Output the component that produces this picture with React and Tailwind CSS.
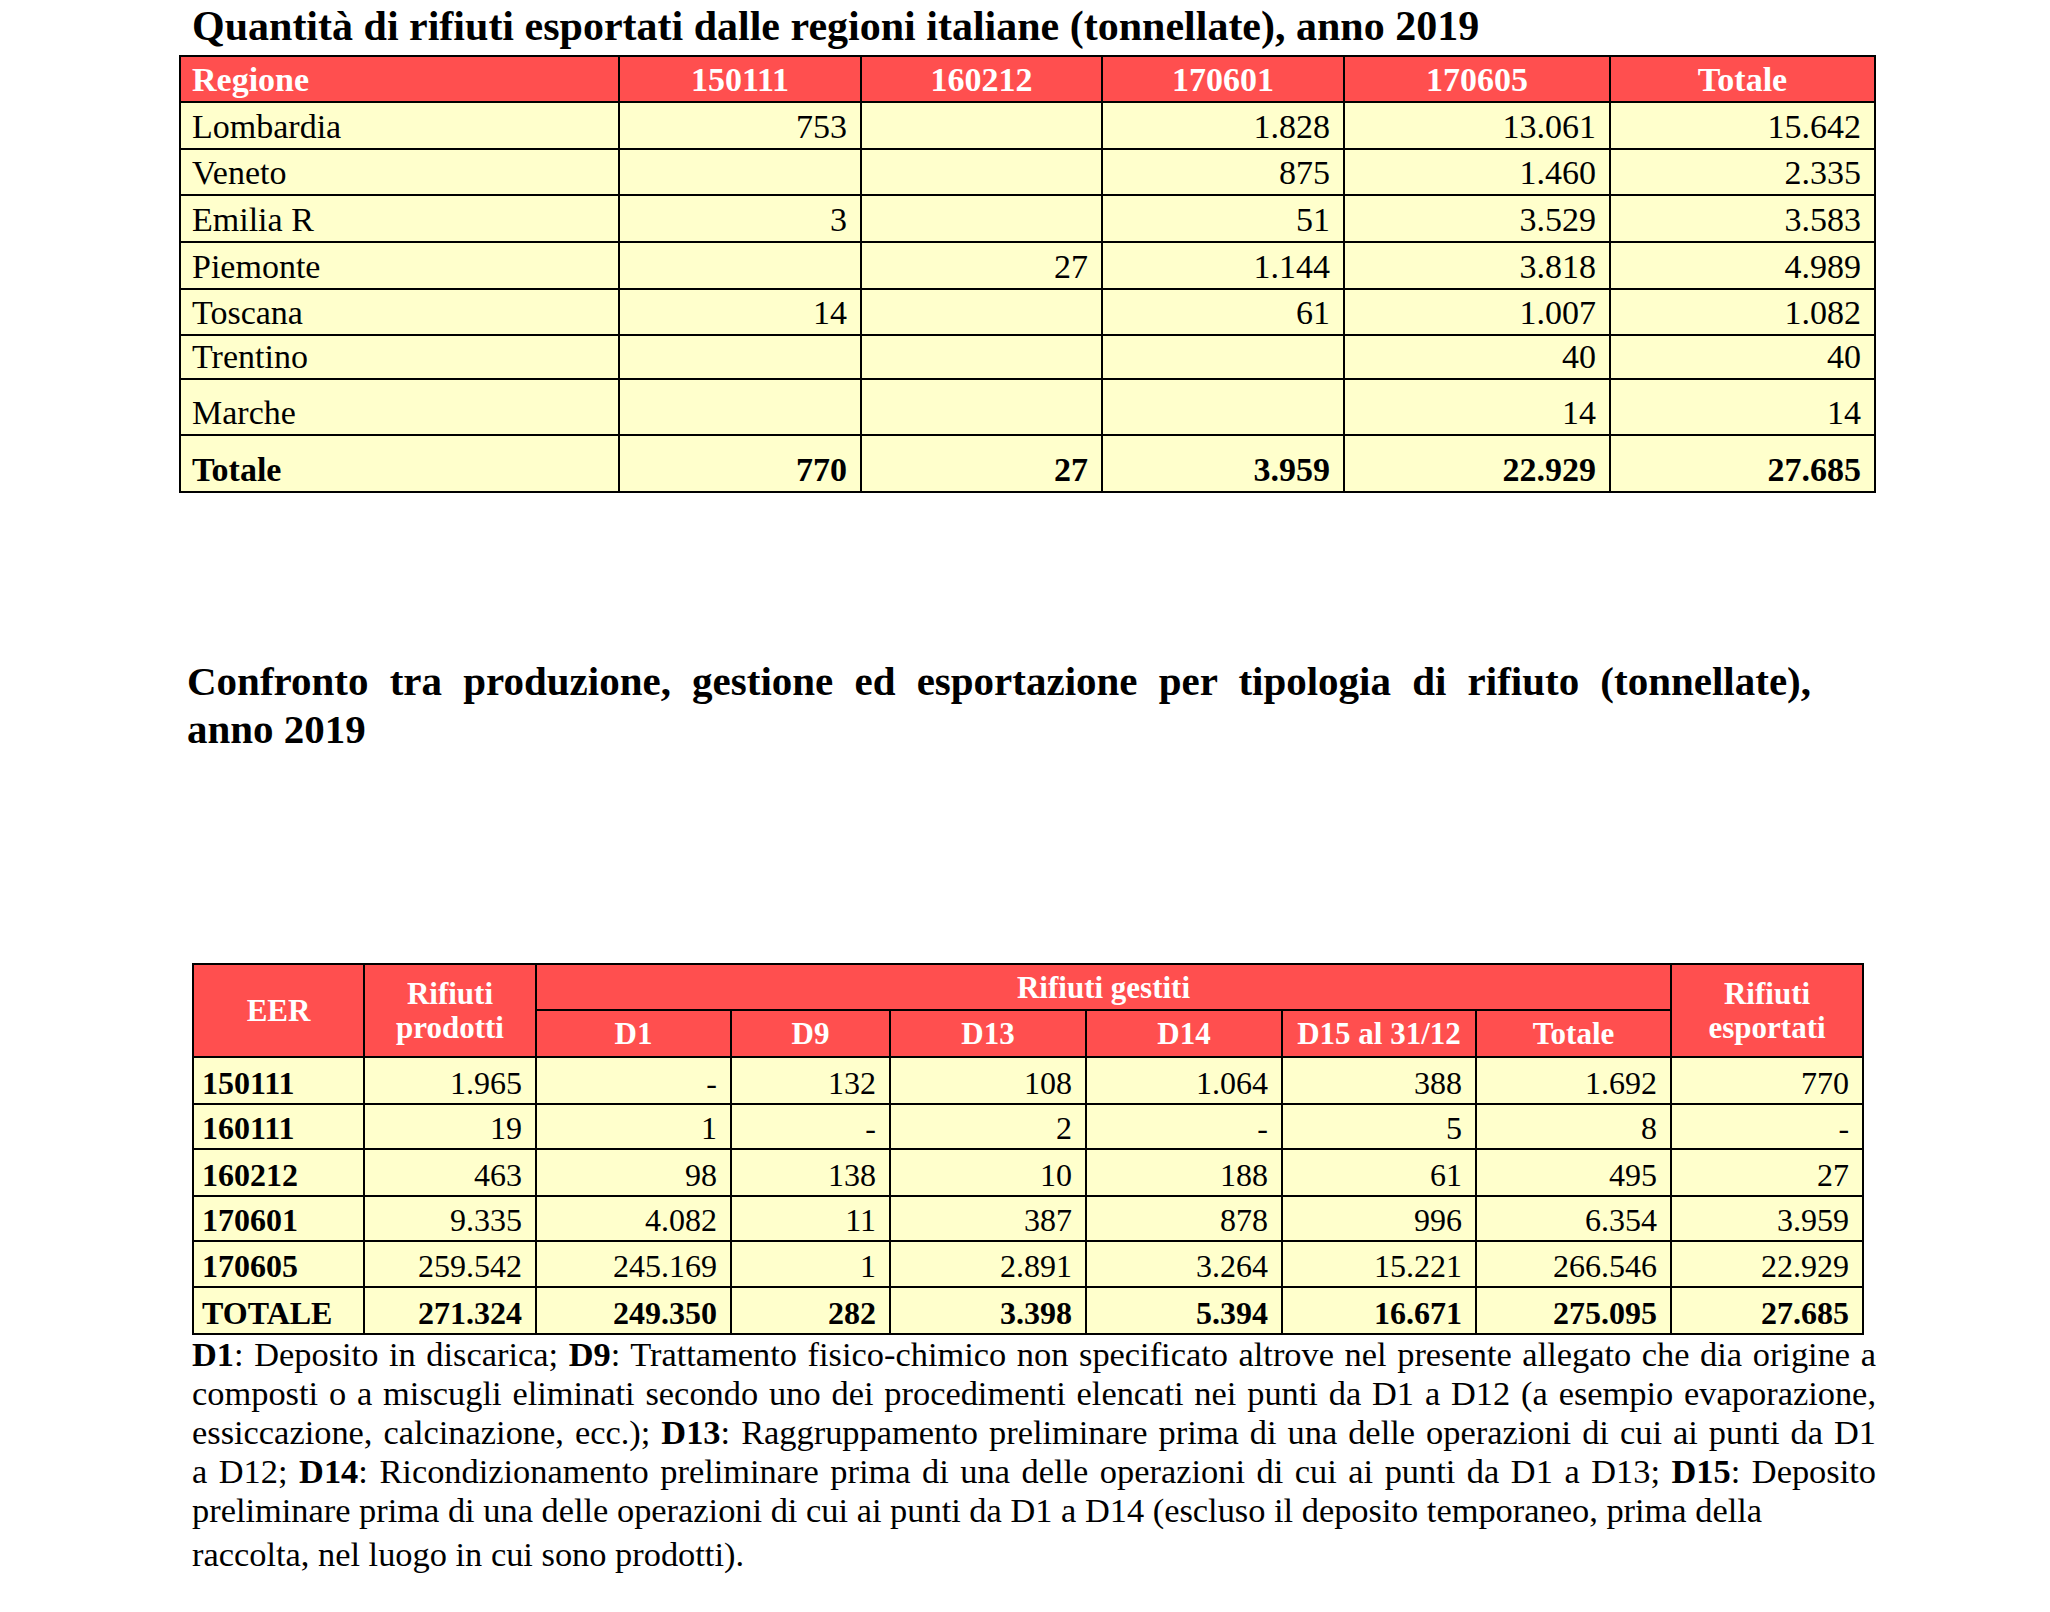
import React from "react";

const regioni = [
  ["Lombardia", "753", "", "1.828", "13.061", "15.642"],
  ["Veneto", "", "", "875", "1.460", "2.335"],
  ["Emilia R", "3", "", "51", "3.529", "3.583"],
  ["Piemonte", "", "27", "1.144", "3.818", "4.989"],
  ["Toscana", "14", "", "61", "1.007", "1.082"],
  ["Trentino", "", "", "", "40", "40"],
  ["Marche", "", "", "", "14", "14"],
];
const regioniH = ["h-[47px]", "h-[46px]", "h-[47px]", "h-[47px]", "h-[46px]", "h-[44px]", "h-[56px]"];

const tipologie = [
  ["150111", "1.965", "-", "132", "108", "1.064", "388", "1.692", "770"],
  ["160111", "19", "1", "-", "2", "-", "5", "8", "-"],
  ["160212", "463", "98", "138", "10", "188", "61", "495", "27"],
  ["170601", "9.335", "4.082", "11", "387", "878", "996", "6.354", "3.959"],
  ["170605", "259.542", "245.169", "1", "2.891", "3.264", "15.221", "266.546", "22.929"],
];
const tipologieH = ["h-[47px]", "h-[45px]", "h-[47px]", "h-[45px]", "h-[46px]"];

const cell = "border-2 border-black align-bottom leading-none pb-[4px]";
const head = "border-2 border-black bg-[#ff4f4f] text-white";

export default function App() {
  return (
    <div className="min-h-screen bg-white text-black font-['Liberation_Serif','Times_New_Roman',serif]">
      {/* Tabella regioni */}
      <div className="pl-[179px] pt-[4px]">
        <h2 className="pl-[13px] text-[42px] font-bold leading-[45px] h-[51px] whitespace-nowrap">
          Quantità di rifiuti esportati dalle regioni italiane (tonnellate), anno 2019
        </h2>
        <table className="border-collapse w-[1695px] table-fixed text-[34px] bg-[#ffffcc]">
          <colgroup>
            <col className="w-[439px]" />
            <col className="w-[242px]" />
            <col className="w-[241px]" />
            <col className="w-[242px]" />
            <col className="w-[266px]" />
            <col className="w-[265px]" />
          </colgroup>
          <thead>
            <tr className="h-[46px]">
              <th className={`${head} ${cell} text-left pl-[11px] font-bold`}>Regione</th>
              {["150111", "160212", "170601", "170605", "Totale"].map((h) => (
                <th key={h} className={`${head} ${cell} text-center font-bold`}>
                  {h}
                </th>
              ))}
            </tr>
          </thead>
          <tbody>
            {regioni.map((r, i) => (
              <tr key={r[0]} className={regioniH[i]}>
                <td className={`${cell} pl-[11px]`}>{r[0]}</td>
                {r.slice(1).map((v, j) => (
                  <td key={j} className={`${cell} text-right pr-[13px]`}>
                    {v}
                  </td>
                ))}
              </tr>
            ))}
            <tr className="h-[57px] font-bold">
              <td className={`${cell} pl-[11px]`}>Totale</td>
              {["770", "27", "3.959", "22.929", "27.685"].map((v, j) => (
                <td key={j} className={`${cell} text-right pr-[13px]`}>
                  {v}
                </td>
              ))}
            </tr>
          </tbody>
        </table>
      </div>

      {/* Titolo confronto */}
      <div className="pl-[187px] pt-[164px] w-[1811px] text-[41px] font-bold leading-[48px]">
        <p className="text-justify [text-align-last:justify]">
          Confronto tra produzione, gestione ed esportazione per tipologia di rifiuto (tonnellate),
        </p>
        <p>anno 2019</p>
      </div>

      {/* Tabella tipologie */}
      <div className="pl-[192px] pt-[210px]">
        <table className="border-collapse w-[1670px] table-fixed text-[32px] bg-[#ffffcc]">
          <colgroup>
            <col className="w-[171px]" />
            <col className="w-[172px]" />
            <col className="w-[195px]" />
            <col className="w-[159px]" />
            <col className="w-[196px]" />
            <col className="w-[196px]" />
            <col className="w-[194px]" />
            <col className="w-[195px]" />
            <col className="w-[192px]" />
          </colgroup>
          <thead className="font-bold text-[31px]">
            <tr className="h-[46px]">
              <th rowSpan={2} className={`${head} text-center align-middle leading-none`}>
                EER
              </th>
              <th rowSpan={2} className={`${head} text-center align-middle leading-[34px]`}>
                Rifiuti
                <br />
                prodotti
              </th>
              <th colSpan={6} className={`${head} text-center align-middle leading-none`}>
                Rifiuti gestiti
              </th>
              <th rowSpan={2} className={`${head} text-center align-middle leading-[34px]`}>
                Rifiuti
                <br />
                esportati
              </th>
            </tr>
            <tr className="h-[47px]">
              {["D1", "D9", "D13", "D14", "D15 al 31/12", "Totale"].map((h) => (
                <th key={h} className={`${head} text-center align-middle leading-none`}>
                  {h}
                </th>
              ))}
            </tr>
          </thead>
          <tbody>
            {tipologie.map((r, i) => (
              <tr key={r[0]} className={tipologieH[i]}>
                <td className={`${cell} pl-[8px] font-bold`}>{r[0]}</td>
                {r.slice(1).map((v, j) => (
                  <td key={j} className={`${cell} text-right pr-[13px]`}>
                    {v}
                  </td>
                ))}
              </tr>
            ))}
            <tr className="h-[47px] font-bold">
              <td className={`${cell} pl-[8px]`}>TOTALE</td>
              {["271.324", "249.350", "282", "3.398", "5.394", "16.671", "275.095", "27.685"].map((v, j) => (
                <td key={j} className={`${cell} text-right pr-[13px]`}>
                  {v}
                </td>
              ))}
            </tr>
          </tbody>
        </table>

        {/* Legenda */}
        <div className="w-[1684px] text-[34.4px] leading-[39px]">
          <p className="text-justify [text-align-last:justify] whitespace-nowrap">
            <b>D1</b>: Deposito in discarica; <b>D9</b>: Trattamento fisico-chimico non specificato altrove nel presente allegato che dia origine a
          </p>
          <p className="text-justify [text-align-last:justify] whitespace-nowrap">
            composti o a miscugli eliminati secondo uno dei procedimenti elencati nei punti da D1 a D12 (a esempio evaporazione,
          </p>
          <p className="text-justify [text-align-last:justify] whitespace-nowrap">
            essiccazione, calcinazione, ecc.); <b>D13</b>: Raggruppamento preliminare prima di una delle operazioni di cui ai punti da D1
          </p>
          <p className="text-justify [text-align-last:justify] whitespace-nowrap">
            a D12; <b>D14</b>: Ricondizionamento preliminare prima di una delle operazioni di cui ai punti da D1 a D13; <b>D15</b>: Deposito
          </p>
          <p className="whitespace-nowrap">
            preliminare prima di una delle operazioni di cui ai punti da D1 a D14 (escluso il deposito temporaneo, prima della
          </p>
          <p className="pt-[5px]">raccolta, nel luogo in cui sono prodotti).</p>
        </div>
      </div>
    </div>
  );
}
